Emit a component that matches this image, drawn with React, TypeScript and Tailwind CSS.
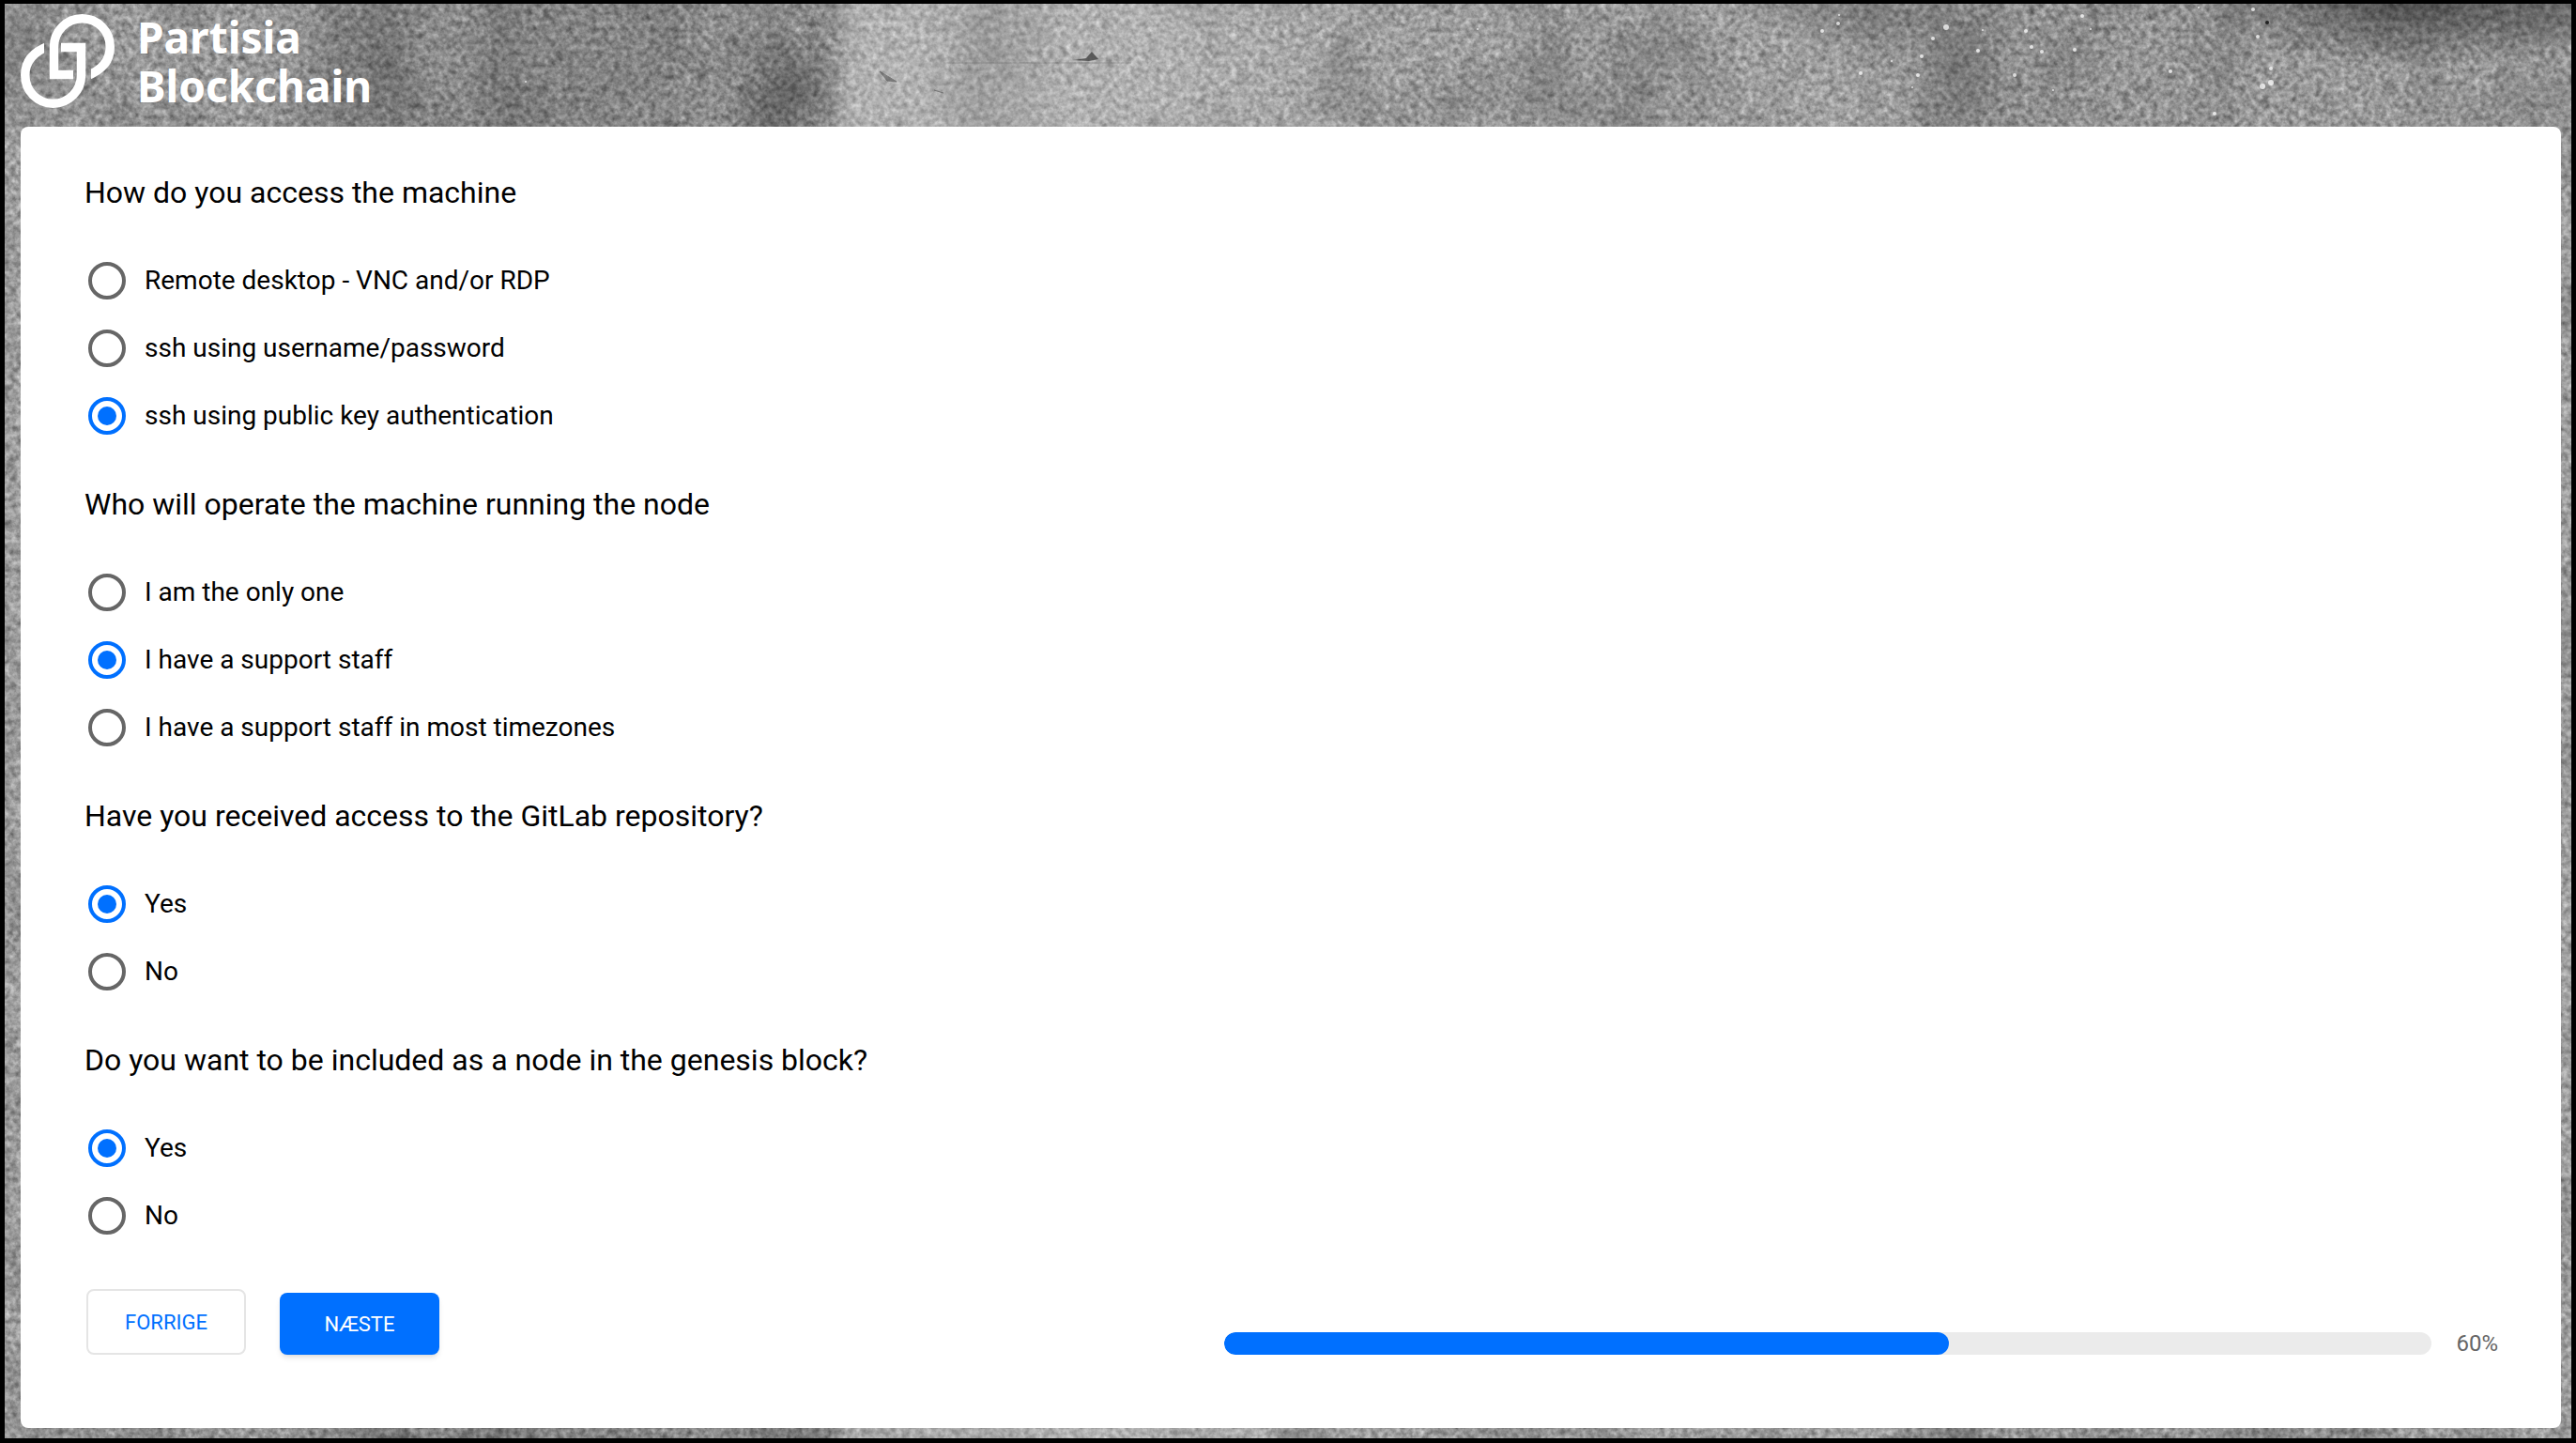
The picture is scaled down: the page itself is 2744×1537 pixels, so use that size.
import { useState } from "react";

type Question = { id: string; title: string; options: string[]; initial: number };

const questions: Question[] = [
  {
    id: "access",
    title: "How do you access the machine",
    options: ["Remote desktop - VNC and/or RDP", "ssh using username/password", "ssh using public key authentication"],
    initial: 2,
  },
  {
    id: "operator",
    title: "Who will operate the machine running the node",
    options: ["I am the only one", "I have a support staff", "I have a support staff in most timezones"],
    initial: 1,
  },
  { id: "gitlab", title: "Have you received access to the GitLab repository?", options: ["Yes", "No"], initial: 0 },
  {
    id: "genesis",
    title: "Do you want to be included as a node in the genesis block?",
    options: ["Yes", "No"],
    initial: 0,
  },
];

/* Paint specks: centre x, centre y, radius. */
const specks = [
  [1936, 29, 2], [1953, 21, 2], [1954, 12, 1], [2068, 25, 3], [2054, 37, 2], [2107, 28, 1], [2153, 29, 2],
  [2213, 13, 2], [2222, 27, 1], [2337, 4, 1], [2395, 6, 2], [2400, 35, 2], [2159, 46, 2], [2170, 51, 2],
  [2205, 49, 2], [2102, 50, 2], [2042, 56, 2], [2010, 61, 1], [1977, 74, 2], [2038, 76, 2], [2141, 76, 2],
  [2307, 72, 2], [2414, 69, 2], [2414, 84, 3], [2405, 88, 3], [2032, 89, 1], [2182, 92, 1], [2354, 117, 2],
  [1569, 27, 1], [555, 83, 1],
];

/* Worn concrete wall behind the whole page. */
function Concrete() {
  return (
    <svg className="absolute inset-0 -z-10 h-full w-full" aria-hidden="true">
      <defs>
        <filter id="grain" x="0" y="0" width="100%" height="100%" colorInterpolationFilters="sRGB">
          <feTurbulence type="fractalNoise" baseFrequency="0.16" numOctaves="3" seed="7" />
          <feColorMatrix values="0.5 0.15 0 0 0.28  0.5 0.15 0 0 0.28  0.5 0.15 0 0 0.28  0 0 0 0 1" />
        </filter>
        <filter id="stains" x="0" y="0" width="100%" height="100%" colorInterpolationFilters="sRGB">
          <feTurbulence type="fractalNoise" baseFrequency="0.009 0.007" numOctaves="7" seed="4" />
          <feColorMatrix values="0 0 0 0 0.1  0 0 0 0 0.1  0 0 0 0 0.1  2 0 0 0 -0.85" />
        </filter>
        <filter id="pits" x="0" y="0" width="100%" height="100%" colorInterpolationFilters="sRGB">
          <feTurbulence type="fractalNoise" baseFrequency="0.06" numOctaves="4" seed="33" />
          <feColorMatrix values="0 0 0 0 0.15  0 0 0 0 0.15  0 0 0 0 0.15  4 0 0 0 -2.5" />
        </filter>
        <linearGradient id="tone">
          <stop offset="0" stopColor="#fff" stopOpacity="0.06" />
          <stop offset="0.08" stopColor="#000" stopOpacity="0" />
          <stop offset="0.22" stopColor="#000" stopOpacity="0.15" />
          <stop offset="0.315" stopColor="#000" stopOpacity="0.04" />
          <stop offset="0.33" stopColor="#fff" stopOpacity="0.24" />
          <stop offset="0.46" stopColor="#fff" stopOpacity="0.22" />
          <stop offset="0.55" stopColor="#fff" stopOpacity="0.04" />
          <stop offset="0.72" stopColor="#fff" stopOpacity="0.08" />
          <stop offset="0.8" stopColor="#000" stopOpacity="0.03" />
          <stop offset="1" stopColor="#fff" stopOpacity="0.06" />
        </linearGradient>
        <radialGradient id="shade">
          <stop offset="0" stopColor="#000" stopOpacity="0.5" />
          <stop offset="1" stopColor="#000" stopOpacity="0" />
        </radialGradient>
      </defs>
      <rect width="100%" height="100%" filter="url(#grain)" />
      <rect width="100%" height="100%" filter="url(#stains)" opacity="0.32" />
      <rect width="100%" height="100%" filter="url(#pits)" opacity="0.3" />
      <rect width="100%" height="100%" fill="url(#tone)" />
      <ellipse cx="2580" cy="0" rx="240" ry="70" fill="url(#shade)" />
      <ellipse cx="835" cy="90" rx="60" ry="60" fill="url(#shade)" opacity="0.5" />
      <ellipse cx="1980" cy="0" rx="160" ry="50" fill="url(#shade)" opacity="0.4" />
      {specks.map(([x, y, r]) => (
        <circle key={`${x}-${y}`} cx={x} cy={y} r={r} fill="#fff" opacity="0.75" />
      ))}
      <path d="M1138 60l14-2 6-7 7 8-10 2z" fill="#3c3c3c" opacity="0.75" />
      <path d="M932 72l10 6 8 5-10-1zM990 92l10 3" fill="#3c3c3c" stroke="#3c3c3c" opacity="0.5" />
      <path d="M1000 63h200" stroke="#555" opacity="0.35" />
      <circle cx="2410" cy="20" r="2" fill="#222" />
    </svg>
  );
}

function Logo() {
  return (
    <a href="#" className="flex w-fit items-center gap-6 text-white">
      <svg className="h-[100px] w-[100px]" viewBox="0 0 100 100" fill="none" stroke="currentColor" strokeWidth="9.5" aria-hidden="true">
        <clipPath id="upper-link">
          <path d="M0 0H100V100H75V50H56V100H0z" />
        </clipPath>
        <clipPath id="lower-link">
          <path d="M0 0H25V50H43V0H100V100H0z" />
        </clipPath>
        <path clipPath="url(#upper-link)" d="M56 64.500H35.500V35C35.500 18 49 4.750 65.500 4.750S95.250 18 95.250 35C95.250 50 86 60 70 66" />
        <path clipPath="url(#lower-link)" d="M43 35.500H64.500V65C64.500 82 51 95.250 34.500 95.250S4.750 82 4.750 65C4.750 50 14 40 30 34" />
      </svg>
      <span className="flex flex-col font-['Noto_Sans'] text-[46px] leading-[52px] font-bold">
        <span className="block">Partisia</span>
        <span className="block">Blockchain</span>
      </span>
    </a>
  );
}

function QuestionGroup({ question }: { question: Question }) {
  const [selected, setSelected] = useState(question.initial);
  return (
    <fieldset>
      <legend className="py-[34px] text-[32px] leading-[48px]">{question.title}</legend>
      {question.options.map((option, i) => (
        <label key={option} className="ml-1 flex h-[72px] w-fit items-center gap-5 text-[28px]">
          <input
            type="radio"
            name={question.id}
            checked={selected === i}
            onChange={() => setSelected(i)}
            className="grid h-10 w-10 appearance-none place-items-center rounded-full border-4 border-[#666] before:h-5 before:w-5 before:rounded-full checked:border-[#0070ff] checked:before:bg-[#0070ff]"
          />
          {option}
        </label>
      ))}
    </fieldset>
  );
}

export default function App() {
  const progress = 60;
  return (
    <div className="relative isolate flex min-h-screen flex-col border-x-[5px] border-t-4 border-b-[5px] border-black pr-[11px] pb-[11px] pl-[17px] font-[Roboto,sans-serif] text-black">
      <Concrete />
      <header className="pt-[9px] pb-[18px]">
        <Logo />
      </header>
      <main className="grow rounded-lg bg-white pt-3 pr-[67px] pl-[68px]">
        <form onSubmit={(e) => e.preventDefault()}>
          {questions.map((q) => (
            <QuestionGroup key={q.id} question={q} />
          ))}
          <div className="flex items-end justify-between pt-[42px] pb-[78px]">
            <div className="ml-0.5 flex items-end gap-9 text-[22px]">
              <button type="button" className="h-[70px] w-[170px] rounded-lg border-2 border-[#e5e5e5] text-[#0070ff]">
                FORRIGE
              </button>
              <button type="submit" className="h-[66px] w-[170px] rounded-lg bg-[#0070ff] text-white shadow-md">
                NÆSTE
              </button>
            </div>
            <div className="flex h-6 w-[52.8%] items-center gap-[26px]">
              <div
                role="progressbar"
                aria-label="Progress"
                aria-valuenow={progress}
                aria-valuemin={0}
                aria-valuemax={100}
                className="h-6 grow overflow-hidden rounded-full bg-[#ebebeb]"
              >
                <div className="h-full rounded-full bg-[#0070ff]" style={{ width: `${progress}%` }} />
              </div>
              <span className="text-2xl text-[#666]">{progress}%</span>
            </div>
          </div>
        </form>
      </main>
    </div>
  );
}
